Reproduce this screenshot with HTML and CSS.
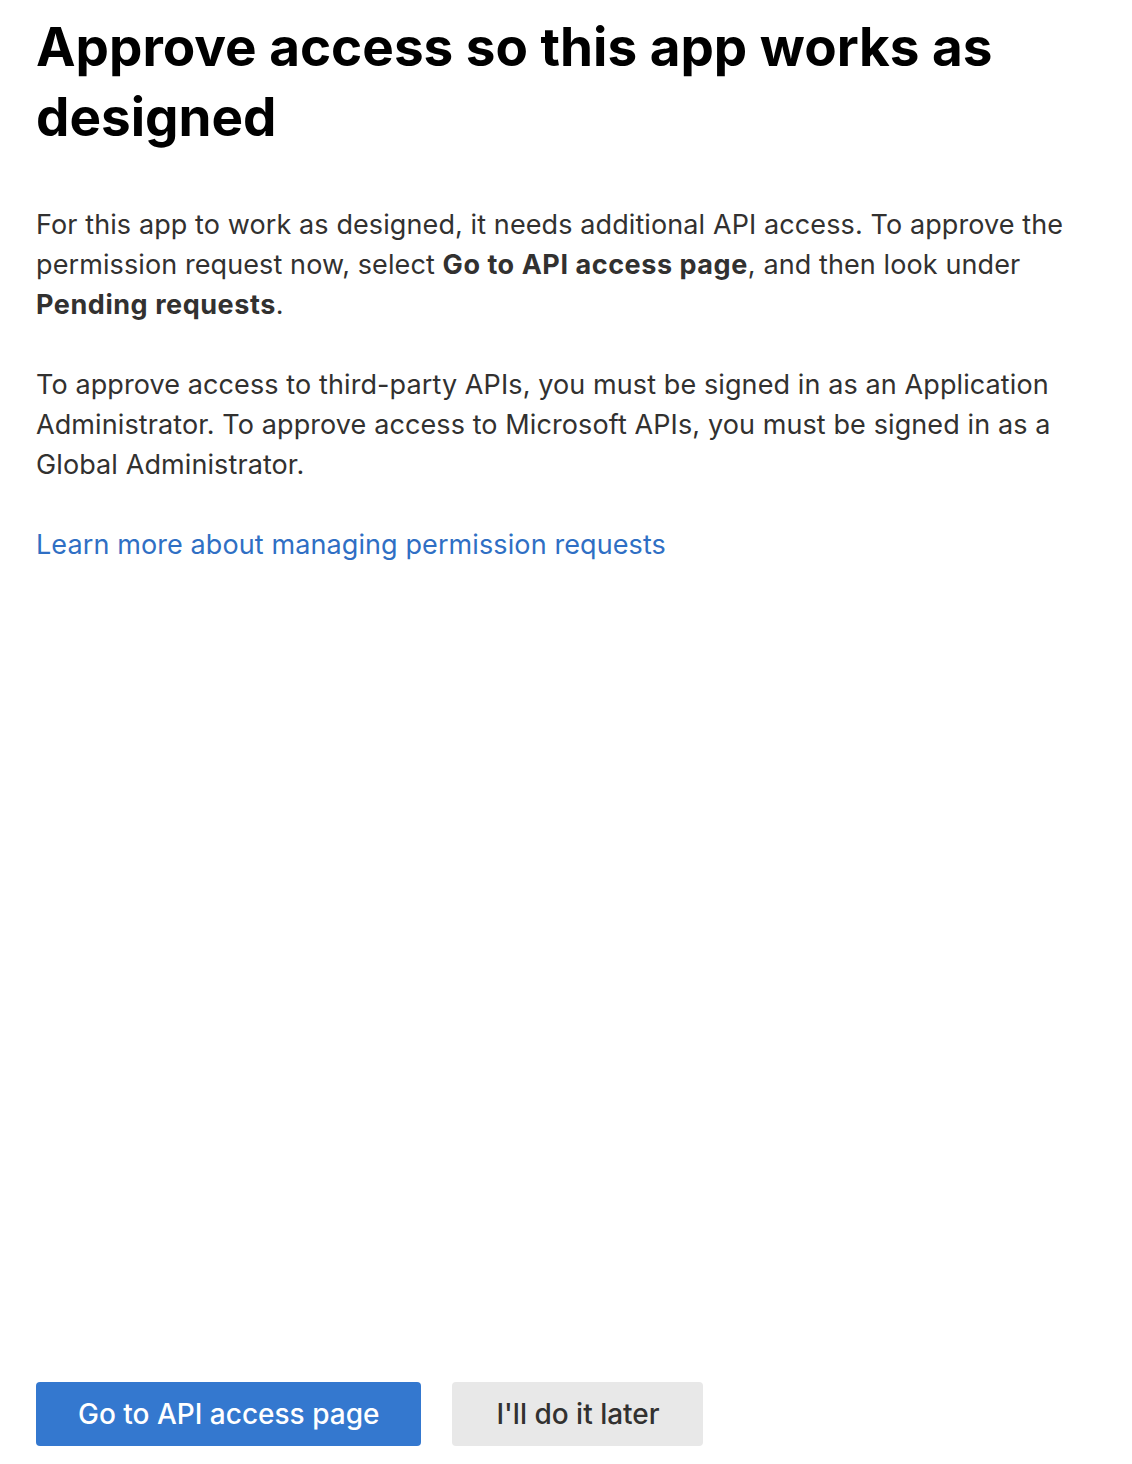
FILE: index.html
```html
<!DOCTYPE html>
<html lang="en">
<head>
<meta charset="utf-8">
<title>Approve access</title>
<link rel="stylesheet" href="styles.css">
</head>
<body>
<div class="page">
  <main class="content">
    <h1 class="title">Approve access so this app works as designed</h1>
    <p class="text">For this app to work as designed, it needs additional API access. To approve the permission request now, select <strong>Go to API access page</strong>, and then look under <strong>Pending requests</strong>.</p>
    <p class="text">To approve access to third-party APIs, you must be signed in as an Application Administrator. To approve access to Microsoft APIs, you must be signed in as a Global Administrator.</p>
    <p class="text"><a class="link" href="#">Learn more about managing permission requests</a></p>
  </main>
  <footer class="actions">
    <button class="btn btn-primary" type="button">Go to API access page</button>
    <button class="btn btn-secondary" type="button">I'll do it later</button>
  </footer>
</div>
</body>
</html>
```

FILE: styles.css
```css
html, body {
  margin: 0;
  padding: 0;
  background: #ffffff;
}
body {
  font-family: Inter, "Noto Sans", "Liberation Sans", sans-serif;
  color: #323130;
}
.page {
  box-sizing: border-box;
  height: 1464px;
  padding: 12px 36px 18px 36px;
  display: flex;
  flex-direction: column;
}
.content {
  flex: 1;
  max-width: 1060px;
}
.title {
  margin: 0 0 53px 0;
  font-size: 53px;
  line-height: 70px;
  font-weight: 700;
  color: #000000;
}
.text {
  margin: 0 0 40px 0;
  font-size: 27px;
  line-height: 40px;
  font-weight: 400;
  letter-spacing: 0.1px;
}
.text strong {
  font-weight: 700;
  letter-spacing: 0.55px;
}
.link {
  color: #2f6fc4;
  text-decoration: none;
}
.actions {
  display: flex;
  gap: 31px;
}
.btn {
  height: 64px;
  border: none;
  border-radius: 4px;
  padding: 0 42px;
  font-family: inherit;
  font-size: 28px;
  font-weight: 500;
}
.btn-primary {
  background: #3478cf;
  color: #ffffff;
}
.btn-secondary {
  background: #e8e8e8;
  color: #323130;
  padding: 0 43px 0 44px;
}
```
